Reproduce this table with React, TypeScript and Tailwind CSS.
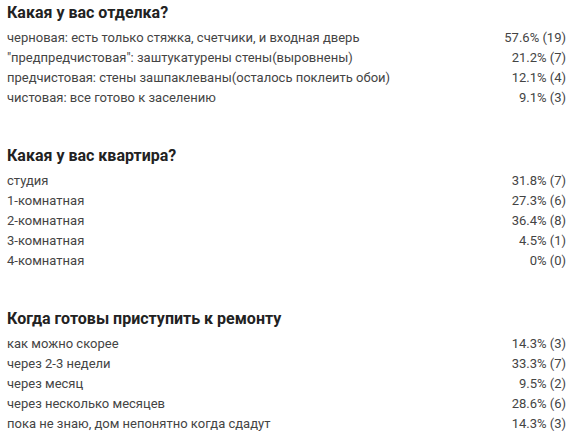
import React from "react";

type Row = { label: string; value: string };

const sections: { title: string; rows: Row[] }[] = [
  {
    title: "Какая у вас отделка?",
    rows: [
      { label: "черновая: есть только стяжка, счетчики, и входная дверь", value: "57.6% (19)" },
      { label: "\"предпредчистовая\": заштукатурены стены(выровнены)", value: "21.2% (7)" },
      { label: "предчистовая: стены зашпаклеваны(осталось поклеить обои)", value: "12.1% (4)" },
      { label: "чистовая: все готово к заселению", value: "9.1% (3)" },
    ],
  },
  {
    title: "Какая у вас квартира?",
    rows: [
      { label: "студия", value: "31.8% (7)" },
      { label: "1-комнатная", value: "27.3% (6)" },
      { label: "2-комнатная", value: "36.4% (8)" },
      { label: "3-комнатная", value: "4.5% (1)" },
      { label: "4-комнатная", value: "0% (0)" },
    ],
  },
  {
    title: "Когда готовы приступить к ремонту",
    rows: [
      { label: "как можно скорее", value: "14.3% (3)" },
      { label: "через 2-3 недели", value: "33.3% (7)" },
      { label: "через месяц", value: "9.5% (2)" },
      { label: "через несколько месяцев", value: "28.6% (6)" },
      { label: "пока не знаю, дом непонятно когда сдадут", value: "14.3% (3)" },
    ],
  },
];

export default function App() {
  return (
    <div className="w-[574px] h-[438px] bg-white overflow-hidden pl-[7px] pr-[8px] pt-[3px] font-['Roboto',sans-serif]">
      <div className="flex flex-col gap-[38px]">
        {sections.map((s) => (
          <div key={s.title}>
            <h2 className="text-[16px] leading-[20px] font-bold text-[#222] mb-[5px]">{s.title}</h2>
            {s.rows.map((r) => (
              <div key={r.label} className="flex justify-between h-[20px] items-center text-[13px] text-[#444]">
                <span>{r.label}</span>
                <span>{r.value}</span>
              </div>
            ))}
          </div>
        ))}
      </div>
    </div>
  );
}
